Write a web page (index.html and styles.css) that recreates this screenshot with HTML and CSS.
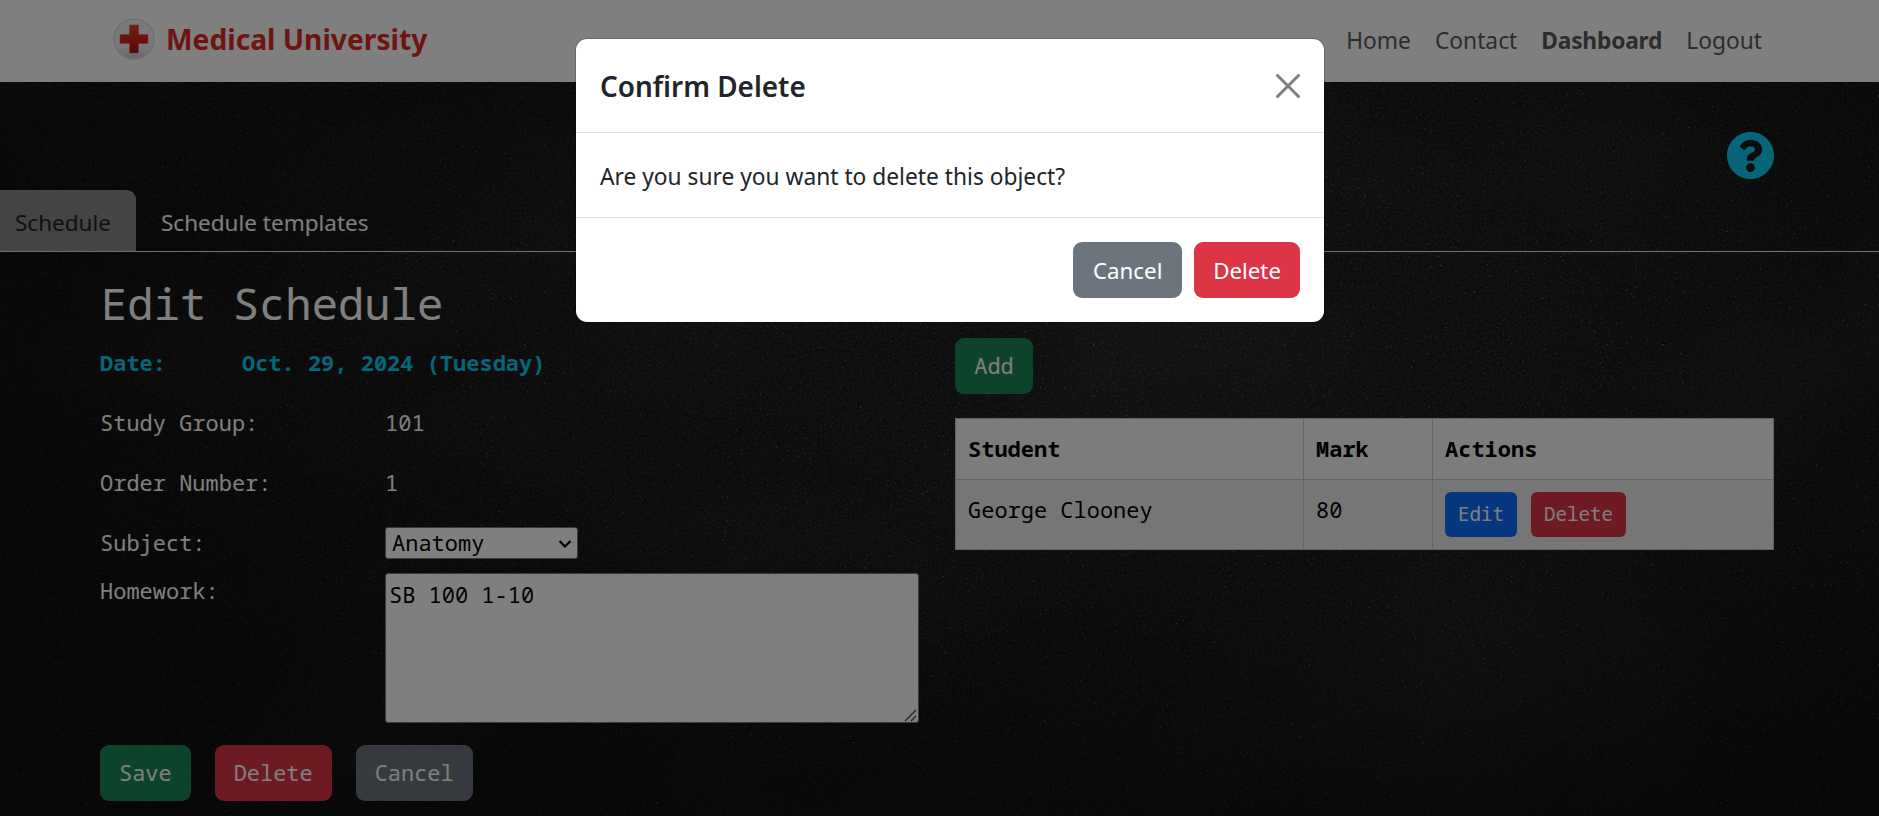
FILE: index.html
```html
<!DOCTYPE html>
<html lang="en">
<head>
<meta charset="utf-8">
<title>Medical University</title>
<link rel="stylesheet" href="styles.css">
</head>
<body>
<svg class="board" width="1879" height="816" aria-hidden="true">
  <filter id="grain" x="0" y="0" width="100%" height="100%" color-interpolation-filters="sRGB">
    <feTurbulence type="fractalNoise" baseFrequency="0.4" numOctaves="2" seed="11"/>
    <feColorMatrix values="0 0 0 0 1  0 0 0 0 1  0 0 0 0 1  0.16 0 0 0 -0.06"/>
  </filter>
  <filter id="specks" x="0" y="0" width="100%" height="100%" color-interpolation-filters="sRGB">
    <feTurbulence type="fractalNoise" baseFrequency="0.45" numOctaves="3" seed="7"/>
    <feColorMatrix values="0 0 0 0 1  0 0 0 0 1  0 0 0 0 1  1.8 0 0 0 -1.26"/>
  </filter>
  <filter id="smudge" x="0" y="0" width="100%" height="100%" color-interpolation-filters="sRGB">
    <feTurbulence type="fractalNoise" baseFrequency="0.003 0.005" numOctaves="3" seed="4"/>
    <feColorMatrix values="0 0 0 0 1  0 0 0 0 1  0 0 0 0 1  0.1 0 0 0 -0.04"/>
  </filter>
  <radialGradient id="vignette" cx=".62" cy=".4" r=".65"><stop offset=".3" stop-color="#000" stop-opacity="0"/><stop offset="1" stop-color="#000" stop-opacity=".5"/></radialGradient>
  <rect width="1879" height="816" filter="url(#smudge)"/>
  <rect width="1879" height="816" filter="url(#grain)"/>
  <rect width="1879" height="816" filter="url(#specks)"/>
  <rect width="1879" height="816" fill="url(#vignette)"/>
</svg>
<div class="page">
  <header class="navbar">
    <a class="brand">
      <svg class="logo" viewBox="0 0 42 42">
        <defs>
          <linearGradient id="disc" x1="0" y1="0" x2="0" y2="1"><stop offset="0" stop-color="#f4f4f4"/><stop offset=".7" stop-color="#f0f0f0"/><stop offset="1" stop-color="#cfcfcf"/></linearGradient>
          <linearGradient id="cross" x1="0" y1="0" x2="0" y2="1"><stop offset="0" stop-color="#e03a30"/><stop offset=".6" stop-color="#d61f16"/><stop offset="1" stop-color="#a5120c"/></linearGradient>
        </defs>
        <circle cx="21" cy="21" r="20" fill="url(#disc)" stroke="#dedede" stroke-width="1.5"/>
        <path d="M16.500 7h9v9.500h9.500v9h-9.500V35h-9v-9.500H7v-9h9.500z" fill="url(#cross)" stroke="#d8706a" stroke-width=".6"/>
      </svg>
      <span>Medical University</span>
    </a>
    <nav class="links"><a>Home</a><a>Contact</a><a class="active">Dashboard</a><a>Logout</a></nav>
  </header>
  <div class="helpbar">
    <svg class="help" viewBox="8 8 496 496"><path d="M504 256c0 136.997-111.043 248-248 248S8 392.997 8 256C8 119.083 119.043 8 256 8s248 111.083 248 248zM262.655 90c-54.497 0-89.255 22.957-116.549 63.758-3.536 5.286-2.353 12.415 2.715 16.258l34.699 26.31c5.205 3.947 12.621 3.008 16.665-2.122 17.864-22.658 30.113-35.797 57.303-35.797 20.429 0 45.698 13.148 45.698 32.958 0 14.976-12.363 22.667-32.534 33.976C247.128 238.528 216 254.941 216 296v4c0 6.627 5.373 12 12 12h56c6.627 0 12-5.373 12-12v-1.333c0-28.462 83.186-29.647 83.186-106.667 0-58.002-60.165-102-116.531-102zM256 338c-25.365 0-46 20.635-46 46 0 25.364 20.635 46 46 46s46-20.636 46-46c0-25.364-20.635-46-46-46z"/></svg>
  </div>
  <div class="tabs"><a class="tab current">Schedule</a><a class="tab">Schedule templates</a></div>
  <main class="content">
    <form class="schedule">
      <h1>Edit Schedule</h1>
      <div class="date"><span>Date:</span><span>Oct. 29, 2024 (Tuesday)</span></div>
      <div class="row"><label>Study Group:</label><span>101</span></div>
      <div class="row"><label>Order Number:</label><span>1</span></div>
      <div class="row subject"><label>Subject:</label>
        <div class="select-wrap"><select><option>Anatomy</option></select><svg class="chevron" viewBox="0 0 14 10"><path d="M1.500 2l5.500 5.500L12.500 2"/></svg></div>
      </div>
      <div class="row homework"><label>Homework:</label>
        <div class="area-wrap"><textarea>SB 100 1-10</textarea><svg class="grip" viewBox="0 0 13 13"><path d="M1 12L12 1M7 12l5-5"/></svg></div>
      </div>
      <div class="actions"><button type="button" class="btn success">Save</button><button type="button" class="btn danger">Delete</button><button type="button" class="btn secondary">Cancel</button></div>
    </form>
    <section class="marks">
      <button class="btn success add">Add</button>
      <table>
        <thead><tr><th class="student">Student</th><th class="mark">Mark</th><th>Actions</th></tr></thead>
        <tbody><tr><td>George Clooney</td><td>80</td><td><div class="cell-actions"><button class="btn small primary">Edit</button><button class="btn small danger">Delete</button></div></td></tr></tbody>
      </table>
    </section>
  </main>
</div>
<div class="backdrop">
  <div class="modal" role="dialog">
    <div class="modal-header"><h2>Confirm Delete</h2>
      <svg class="close" viewBox="0 0 16 16"><path d="M.293.293a1 1 0 0 1 1.414 0L8 6.586 14.293.293a1 1 0 1 1 1.414 1.414L9.414 8l6.293 6.293a1 1 0 0 1-1.414 1.414L8 9.414l-6.293 6.293a1 1 0 0 1-1.414-1.414L6.586 8 .293 1.707a1 1 0 0 1 0-1.414z"/></svg>
    </div>
    <div class="modal-body"><span>Are you sure you want to delete this object?</span></div>
    <div class="modal-footer"><button class="btn secondary cancel">Cancel</button><button class="btn danger">Delete</button></div>
  </div>
</div>
</body>
</html>
```
FILE: styles.css
```css
* { box-sizing: border-box; }
body {
  margin: 0;
  height: 816px;
  overflow: hidden;
  position: relative;
  background: #1a1a1d;
  font: 22.75px/36px "Noto Sans", "Open Sans", sans-serif;
}
.board { position: absolute; inset: 0; }
.page { position: relative; height: 816px; }

.navbar {
  height: 82px;
  padding: 0 117px 0 113px;
  display: flex;
  align-items: center;
  justify-content: space-between;
  background: #fff;
}
.brand {
  display: flex;
  align-items: center;
  gap: 11px;
  color: #dc2a24;
  font-size: 28.2px;
  font-weight: 700;
  white-space: nowrap;
}
.logo { width: 42px; height: 42px; margin-top: -4px; }
.brand span { margin-top: -5px; }
.links { display: flex; gap: 24px; color: #595959; }
.active { font-weight: 700; letter-spacing: -.2px; }

.helpbar {
  height: 108px;
  padding: 50px 105px 0 0;
  display: flex;
  justify-content: flex-end;
}
.help { width: 47px; height: 47px; fill: #0dcaf0; }

.tabs {
  height: 62px;
  display: flex;
  border-bottom: 1px solid #dee2e6;
  color: #fff;
  font-size: 22.5px;
}
.tab { padding: 15px 25px 10px; white-space: nowrap; }
.current {
  width: 136px;
  padding-left: 15px;
  background: rgba(255, 255, 255, .5);
  color: #222;
  border-radius: 0 9px 0 0;
}

.content {
  display: grid;
  grid-template-columns: 819px 819px;
  gap: 36px;
  padding-left: 100px;
  color: #fff;
  font-family: "Noto Sans Mono", "DejaVu Sans Mono", monospace;
  font-size: 21.95px;
  letter-spacing: .03px;
}
h1 {
  margin: 22px 0 13px 1px;
  font-size: 43.85px;
  line-height: 58px;
  font-weight: 400;
}
.date {
  display: flex;
  gap: 76px;
  margin-bottom: 24px;
  color: #0dcaf0;
  font-weight: 700;
}
.row { display: grid; grid-template-columns: 285px 534px; margin-bottom: 24px; }
.subject { height: 36px; margin-bottom: 12px; align-items: center; }
.homework { margin-bottom: 22px; }
select, textarea {
  display: block;
  font: inherit;
  letter-spacing: inherit;
  color: #000;
  background: #fff;
  border: 1px solid #767676;
  border-radius: 3px;
}
.select-wrap { position: relative; width: 193px; margin-top: -1px; }
select { width: 193px; height: 32px; padding: 0 6px; line-height: 29px; appearance: none; }
.chevron {
  position: absolute;
  right: 6px;
  top: 12px;
  width: 14px;
  height: 10px;
  fill: none;
  stroke: #000;
  stroke-width: 2.2;
}
.area-wrap { position: relative; }
textarea { width: 100%; height: 150px; margin: 0; padding: 3px; resize: none; }
.grip {
  position: absolute;
  right: 2px;
  bottom: 1px;
  width: 13px;
  height: 13px;
  fill: none;
  stroke: #444;
  stroke-width: 1.4;
}
.actions { display: flex; gap: 24px; }

.btn {
  height: 56px;
  padding: 0 19px;
  border: 0;
  border-radius: 9px;
  color: #fff;
  font: inherit;
  white-space: nowrap;
}
.success { background: #198754; }
.danger { background: #dc3545; }
.secondary { background: #6c757d; }
.primary { background: #0d6efd; }
.small { height: 45px; padding: 0 13px 1px; font-size: 19.2px; border-radius: 6px; }

.marks { padding-top: 86px; }
.add { display: block; width: 78px; }
table {
  width: 819px;
  height: 132px;
  margin-top: 24px;
  border-collapse: collapse;
  table-layout: fixed;
  color: #000;
}
th, td {
  padding: 12px;
  border: 1px solid #c6c7c8;
  text-align: left;
  vertical-align: top;
}
th { background: #f8f8f8; height: 61px; }
td { background: #ececec; }
.student { width: 348px; }
.mark { width: 129px; }
.cell-actions { display: flex; gap: 14px; }

.backdrop {
  position: absolute;
  inset: 0;
  padding-top: 39px;
  background: rgba(0, 0, 0, .5);
}
.modal {
  width: 748px;
  height: 283px;
  margin-left: 576px;
  background: #fff;
  border-radius: 11px;
  color: #212529;
  box-shadow: 0 0 0 1px rgba(0, 0, 0, .18);
}
.modal-header {
  height: 94px;
  padding: 0 24px;
  display: flex;
  align-items: center;
  justify-content: space-between;
  border-bottom: 1px solid #dee2e6;
}
h2 { margin: 0; font-size: 27.9px; font-weight: 600; }
.close { width: 24px; height: 24px; fill: #7f7f7f; }
.modal-body { height: 85px; padding: 26px 24px 20px; border-bottom: 1px solid #dee2e6; white-space: nowrap; }
.modal-footer { padding: 24px; display: flex; justify-content: flex-end; gap: 12px; font-size: 22.3px; }
.modal-footer .btn { padding-top: 2px; }
.modal-footer .cancel { width: 109px; }
```
